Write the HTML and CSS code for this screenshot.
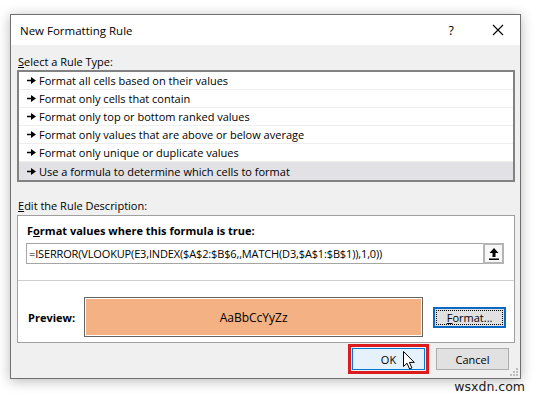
FILE: index.html
```html
<!DOCTYPE html>
<html lang="en">
<head>
    <meta charset="UTF-8">
    <title>New Formatting Rule</title>
<link rel="stylesheet" href="styles.css">
</head>
<body>
    <div class="dialog">
        <div class="titlebar">
            <span class="title">New Formatting Rule</span>
            <span class="help">?</span>
            <svg class="close" width="12" height="12" viewBox="0 0 12 12">
                <path d="M1 1 L11 11 M11 1 L1 11" stroke="#000" stroke-width="1.1" fill="none"/>
            </svg>
        </div>

        <div class="content">
            <div class="label"><u>S</u>elect a Rule Type:</div>
            <div class="listbox">
                <div class="rule"><svg class="pointer" width="9" height="7" viewBox="0 0 9 7"><path d="M0 2.7h5v1.6H0z M4 0 L9 3.5 L4 7z" fill="#000"/></svg>Format all cells based on their values</div>
                <div class="rule"><svg class="pointer" width="9" height="7" viewBox="0 0 9 7"><path d="M0 2.7h5v1.6H0z M4 0 L9 3.5 L4 7z" fill="#000"/></svg>Format only cells that contain</div>
                <div class="rule"><svg class="pointer" width="9" height="7" viewBox="0 0 9 7"><path d="M0 2.7h5v1.6H0z M4 0 L9 3.5 L4 7z" fill="#000"/></svg>Format only top or bottom ranked values</div>
                <div class="rule"><svg class="pointer" width="9" height="7" viewBox="0 0 9 7"><path d="M0 2.7h5v1.6H0z M4 0 L9 3.5 L4 7z" fill="#000"/></svg>Format only values that are above or below average</div>
                <div class="rule"><svg class="pointer" width="9" height="7" viewBox="0 0 9 7"><path d="M0 2.7h5v1.6H0z M4 0 L9 3.5 L4 7z" fill="#000"/></svg>Format only unique or duplicate values</div>
                <div class="rule selected"><svg class="pointer" width="9" height="7" viewBox="0 0 9 7"><path d="M0 2.7h5v1.6H0z M4 0 L9 3.5 L4 7z" fill="#000"/></svg>Use a formula to determine which cells to format</div>
            </div>

            <div class="label label-edit"><u>E</u>dit the Rule Description:</div>
            <div class="group">
                <div class="group-top">
                    <div class="bold">F<u>o</u>rmat values where this formula is true:</div>
                    <div class="formula">
                        <span class="formula-text">=ISERROR(VLOOKUP(E3,INDEX($A$2:$B$6,,MATCH(D3,$A$1:$B$1)),1,0))</span>
                        <span class="collapse">
                            <svg width="10" height="12" viewBox="0 0 10 12">
                                <path d="M5 0 L9.5 5 H6.5 V9 H3.5 V5 H0.5z" fill="#000"/>
                                <rect x="0" y="10.5" width="10" height="1.5" fill="#000"/>
                            </svg>
                        </span>
                    </div>
                </div>
                <div class="preview-row">
                    <span class="bold">Preview:</span>
                    <div class="preview-box"><div class="preview-fill">AaBbCcYyZz</div></div>
                    <div class="btn-format"><div class="focus"><u>F</u>ormat...</div></div>
                </div>
            </div>

            <div class="footer">
                <span class="ok-mark">
                    <span class="btn btn-ok">OK</span>
                    <svg class="cursor" width="12" height="19" viewBox="0 0 12 19">
                        <path d="M0.5 0.5 V15.5 L4 12.2 L6.6 18 L8.9 17 L6.4 11.4 H11.3z" fill="#fff" stroke="#000" stroke-width="1"/>
                    </svg>
                </span>
                <span class="btn">Cancel</span>
            </div>
        </div>

        <svg class="grip" width="8" height="8" viewBox="0 0 8 8">
            <rect x="6" y="0" width="2" height="2" fill="#bdbdbd"/>
            <rect x="3" y="3" width="2" height="2" fill="#bdbdbd"/>
            <rect x="6" y="3" width="2" height="2" fill="#bdbdbd"/>
            <rect x="0" y="6" width="2" height="2" fill="#bdbdbd"/>
            <rect x="3" y="6" width="2" height="2" fill="#bdbdbd"/>
            <rect x="6" y="6" width="2" height="2" fill="#bdbdbd"/>
        </svg>
    </div>

    <div class="watermark">wsxdn.com</div>
</body>
</html>
```

FILE: styles.css
```css
body {
    margin: 0;
    padding: 14px 0 0 10px;
    background-color: #fff;
    font-family: "Open Sans", "Noto Sans", sans-serif;
    font-size: 11px;
    color: #000;
}
.dialog {
    position: relative;
    width: 509px;
    height: 363px;
    border: 1px solid #6f6f6f;
    background-color: #f0f0f0;
    box-shadow: 0 2px 12px rgba(0, 0, 0, 0.28);
}
.titlebar {
    display: flex;
    align-items: center;
    height: 30px;
    background-color: #fff;
    padding-left: 9px;
}
.title {
    font-size: 11.5px;
    flex: 1;
}
.help {
    font-size: 12.5px;
    margin-right: 38px;
}
.close {
    margin-right: 16px;
}
.content {
    padding: 8px 5px 0 6px;
}
.label {
    height: 17px;
    line-height: 17px;
    padding-left: 1px;
}
.label-edit {
    margin-top: 15px;
    margin-bottom: 1px;
}
.listbox {
    border: 2px solid #828282;
    background-color: #fff;
}
.rule {
    display: flex;
    align-items: center;
    height: 18px;
    box-sizing: border-box;
    border-bottom: 1px solid #eeeeee;
    padding-left: 8px;
}
.rule:last-child {
    border-bottom: none;
}
.rule.selected {
    background-color: #e1e1e6;
}
.pointer {
    margin-right: 3px;
}
.group {
    border: 1px solid #a0a0a0;
    background-color: #fff;
    height: 126px;
}
.group-top {
    padding: 7px 10px 0 8px;
    height: 57px;
    border-bottom: 1px solid #cfcfcf;
}
.bold {
    font-weight: bold;
    padding-left: 1px;
}
.formula {
    display: flex;
    align-items: center;
    margin-top: 5px;
    height: 19px;
    border: 1px solid #a5a5a5;
    padding-left: 2px;
}
.formula-text {
    flex: 1;
    font-size: 11px;
    letter-spacing: -0.15px;
}
.collapse {
    display: flex;
    align-items: center;
    justify-content: center;
    width: 17px;
    height: 17px;
    border: 2px solid #b4b4b4;
    background-color: #f7f7f7;
    margin-right: -1px;
}
.preview-row {
    display: flex;
    align-items: center;
    padding: 16px 0 0 9px;
}
.preview-box {
    width: 335px;
    height: 36px;
    border: 1px solid #646464;
    padding: 1px;
    margin-left: 9px;
}
.preview-fill {
    height: 100%;
    background-color: #f4b183;
    display: flex;
    align-items: center;
    justify-content: center;
    font-size: 12px;
}
.btn {
    display: flex;
    align-items: center;
    justify-content: center;
    box-sizing: border-box;
    width: 73px;
    height: 22px;
    background-color: #e1e1e1;
    border: 1px solid #adadad;
}
.btn-format {
    box-sizing: border-box;
    width: 73px;
    height: 21px;
    margin-left: 10px;
    padding: 1px;
    background-color: #e1e1e1;
    border: 2px solid #0c69c4;
}
.focus {
    box-sizing: border-box;
    height: 100%;
    border: 1px dotted #000;
    text-align: center;
    line-height: 13px;
}
.footer {
    display: flex;
    justify-content: flex-end;
    gap: 11px;
    padding: 5px 6px 0 0;
}
.ok-mark {
    position: relative;
    display: flex;
    outline: 3px solid #dc1c1c;
    outline-offset: 1px;
}
.btn-ok {
    background-color: #e5f1fb;
    border-color: #0078d7;
}
.cursor {
    position: absolute;
    left: 51px;
    top: 3px;
}
.grip {
    position: absolute;
    right: 2px;
    bottom: 2px;
}
.watermark {
    width: 515px;
    text-align: right;
    font-family: "DejaVu Sans", sans-serif;
    font-size: 12.5px;
    color: #222;
    line-height: 15px;
}
```
